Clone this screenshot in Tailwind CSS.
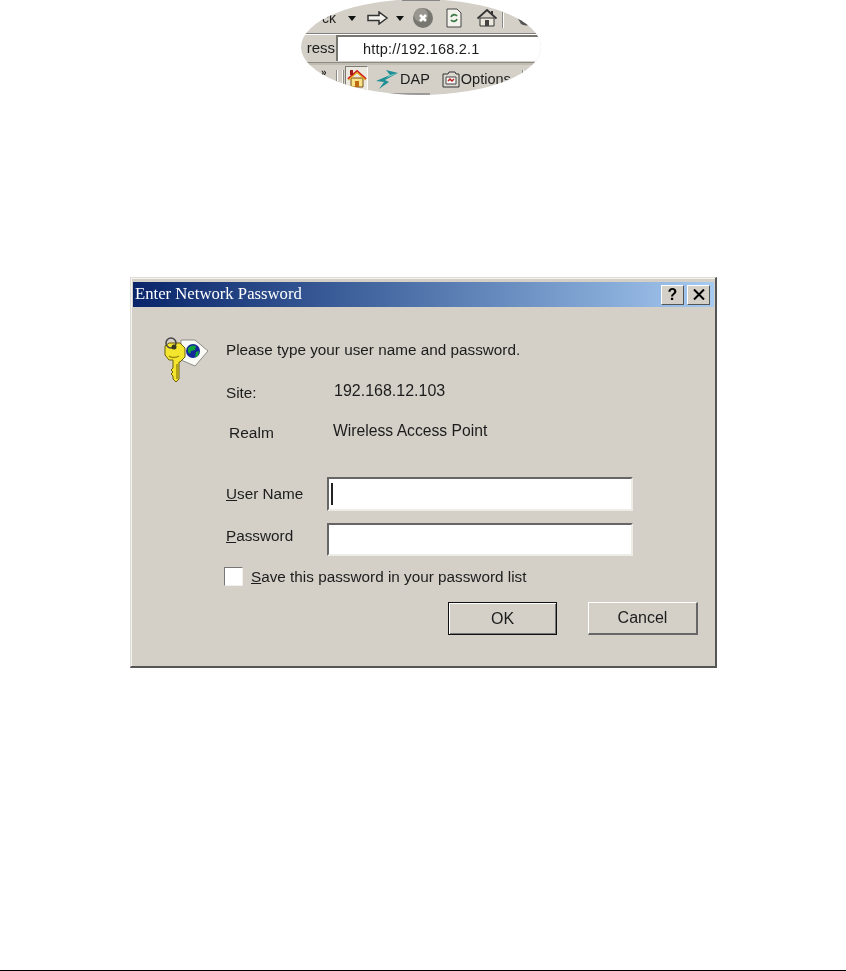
<!DOCTYPE html>
<html>
<head>
<meta charset="utf-8">
<script src="https://cdn.jsdelivr.net/npm/@tailwindcss/browser@4"></script>
</head>
<body class="bg-white font-['Liberation_Sans',sans-serif] text-[#1c1c1c]">
<div class="relative w-[846px] h-[971px] overflow-hidden flex flex-col">

  <!-- lens crop of browser toolbar -->
  <div class="ml-[301px] -mt-[1px] w-[240px] h-[96px] rounded-[50%] overflow-hidden bg-[#d4d0c8] flex flex-col shrink-0 blur-[0.5px]">
    <div class="h-[2px] shrink-0"><div class="ml-[101px] w-[38px] h-[2px] bg-[#888]"></div></div>
    <div class="h-[33px] flex items-center pt-[2px] shrink-0 border-b border-[#808080]">
      <span class="ml-[12px] w-[23px] text-right text-[14px] leading-none">ck</span>
      <svg class="ml-[12px]" width="8" height="5" viewBox="0 0 8 5"><path d="M0 0h8L4 5z" fill="#111"/></svg>
      <svg class="ml-[11px]" width="22" height="14" viewBox="0 0 22 14"><path d="M1 4.500h11V1l8 6-8 6V9.500H1z" fill="#f4f2ec" stroke="#333" stroke-width="1.500"/></svg>
      <svg class="ml-[7px]" width="8" height="5" viewBox="0 0 8 5"><path d="M0 0h8L4 5z" fill="#111"/></svg>
      <svg class="ml-[8px]" width="22" height="22" viewBox="0 0 22 22"><circle cx="11" cy="11" r="10" fill="#77766f"/><circle cx="9" cy="8" r="7" fill="#98968e"/><path d="M8 8l6 6M14 8l-6 6" stroke="#fff" stroke-width="2.500"/></svg>
      <svg class="ml-[12px]" width="16" height="20" viewBox="0 0 16 20"><path d="M1 1h10l4 4v14H1z" fill="#f4f2ec" stroke="#444"/><path d="M5 9a3.500 3.500 0 0 1 6-1M11 11a3.500 3.500 0 0 1-6 1" fill="none" stroke="#3c7a4a" stroke-width="1.800"/></svg>
      <svg class="ml-[15px]" width="20" height="18" viewBox="0 0 20 18"><path d="M3 17V9h14v8z" fill="#ece9df" stroke="#333"/><path d="M0.500 9.500 10 1l9.500 8.500" fill="none" stroke="#333" stroke-width="1.800"/><path d="M14 2h2v4h-2z" fill="#333"/><path d="M8 11h4v6H8z" fill="#444"/></svg>
      <span class="ml-[5px] w-[2px] h-[19px] bg-[#8c8a84] border-r border-white"></span>
      <svg class="ml-[12px] mt-[5px]" width="18" height="12" viewBox="0 0 18 12"><path d="M1 2c4 0 6 3 9 4l7 2c-4 3-9 3-12 1z" fill="#555"/></svg>
    </div>
    <div class="h-[28px] flex shrink-0 border-t border-white">
      <span class="w-[35px] text-right pr-[1px] text-[15px] leading-[26px] whitespace-nowrap">ress</span>
      <div class="flex-1 h-[26px] bg-white border-t-2 border-l-2 border-[#77766f] pl-[25px] text-[14.500px] leading-[24px] tracking-[0.2px]">http://192.168.2.1</div>
    </div>
    <div class="h-[3px] bg-[#c0bcb2] border-t border-[#8c8a84] shrink-0"></div>
    <div class="h-[28px] flex items-center shrink-0">
      <span class="ml-[20px] w-[7px] mb-[12px] text-[10px] font-bold leading-none">»</span>
      <span class="ml-[8px] w-[2px] h-[19px] bg-[#8c8a84] border-r border-white"></span>
      <span class="ml-[4px] w-[2px] h-[19px] bg-[#f4f2ec] border-r border-[#8c8a84]"></span>
      <div class="ml-[1px] w-[23px] h-[26px] bg-[#ebe8e0] border-t border-l border-[#7d7b75] border-b border-b-white border-r border-r-white flex items-center justify-center">
        <svg width="20" height="20" viewBox="0 0 20 20"><path d="M4 18V9h12v9z" fill="#f7e48a" stroke="#7a4a10"/><path d="M1 10 10 2l9 8" fill="none" stroke="#c22" stroke-width="2"/><path d="M1.500 11 10 3.500 18.500 11" fill="none" stroke="#e8b020" stroke-width="1.200"/><path d="M3 1h3v5H3z" fill="#a01818"/><path d="M8 12h4v6H8z" fill="#c06a10"/></svg>
      </div>
      <svg class="ml-[8px]" width="22" height="20" viewBox="0 0 22 20"><path d="M0 12 14 6 10 1 22 4 9 11l4 2L3 20l5-7z" fill="#1e8f95"/><path d="M14 6 22 4 10 9z" fill="#8fd0c8"/></svg>
      <span class="ml-[2px] text-[14.500px] leading-none">DAP</span>
      <svg class="ml-[12px]" width="18" height="17" viewBox="0 0 18 17"><path d="M1 3h5l1-2h6l1 2h3v13H1z" fill="#dcd9d0" stroke="#333"/><path d="M4 6h10v7H4z" fill="#f8f8f8" stroke="#444"/><path d="M6 10l2-2 2 2 2-2" fill="none" stroke="#b22" stroke-width="1.500"/></svg>
      <span class="ml-[1px] text-[14.500px] leading-none w-[50px] whitespace-nowrap">Options</span>
      <span class="ml-[11px] w-[2px] h-[19px] bg-[#8c8a84] border-r border-white"></span>
      <span class="ml-[4px] w-[10px] h-[12px] mb-[6px] border-t-2 border-l-2 border-[#666]"></span>
    </div>
    <div class="h-[2px] shrink-0"><div class="ml-[87px] w-[42px] h-[2px] bg-[#999]"></div></div>
  </div>

  <!-- dialog -->
  <div class="ml-[130px] mt-[182px] w-[587px] h-[391px] shrink-0 bg-[#d4d0c8] border-t border-l border-t-[#dedcd6] border-l-[#dedcd6] border-r-2 border-b-2 border-r-[#555] border-b-[#555] pt-[4px] pl-[2px] pr-[1px] flex flex-col blur-[0.5px] shadow-[inset_1px_1px_0_#f4f3ef]">
    <div class="h-[25px] shrink-0 bg-linear-to-r from-[#0a246a] to-[#a6caf0] flex items-center pl-[2px] pr-[4px]">
      <span class="font-['Liberation_Serif',serif] text-white text-[16.700px] leading-none">Enter Network Password</span>
      <div class="ml-auto flex gap-[3px]">
        <div class="w-[23px] h-[20px] bg-[#d4d0c8] border-t border-l border-white border-r border-b border-r-[#555] border-b-[#555] flex items-center justify-center font-bold text-[16px] leading-none text-black">?</div>
        <div class="w-[23px] h-[20px] bg-[#d4d0c8] border-t border-l border-white border-r border-b border-r-[#555] border-b-[#555] flex items-center justify-center">
          <svg width="12" height="11" viewBox="0 0 12 11"><path d="M1 0.500l10 10M11 0.500l-10 10" stroke="#000" stroke-width="2"/></svg>
        </div>
      </div>
    </div>

    <div class="flex flex-1 min-h-0">
      <div class="w-[93px] shrink-0 pl-[28px] pt-[27px]">
        <svg width="52" height="52" viewBox="163 334 52 52">
          <path d="M183 340 197 340 210 351 197 366 183 360z" fill="#fbfbf6" stroke="#8f8d87"/>
          <circle cx="195" cy="351" r="7" fill="#14289a"/>
          <path d="M190 348c3-3 6-3 8-2l-1 4-4 1-1 3-2-2zM198 352l3-1-1 5-3 1z" fill="#12a33a"/>
          <path d="M171 343h11l5 5v9l-5 5h-1v17l-3 3-3-3v-3l-2-2 2-2-2-2 2-2v-8h-4l-4-5v-9z" fill="#f4e62e" stroke="#6a5f10"/>
          <circle cx="173" cy="343" r="5" fill="none" stroke="#444" stroke-width="1.500"/>
          <circle cx="176" cy="347" r="2.500" fill="#3a3a20"/>
          <path d="M171 356c2 2 7 2 10 0M179 364v15" fill="none" stroke="#9c8c10" stroke-width="1.500"/>
        </svg>
      </div>
      <div class="flex-1 flex flex-col">
        <div class="mt-[33px] h-[20px] text-[15.300px] leading-[20px] whitespace-nowrap">Please type your user name and password.</div>
        <div class="mt-[22px] h-[20px] flex text-[15.300px] leading-[20px]">
          <span class="w-[108px] pt-[1px]">Site:</span><span class="-mt-[1px] text-[16px]">192.168.12.103</span>
        </div>
        <div class="mt-[20px] h-[20px] flex text-[15.300px] leading-[20px]">
          <span class="w-[107px] pl-[3px] pt-[1px] text-[15.500px]">Realm</span><span class="-mt-[1px] text-[15.700px]">Wireless Access Point</span>
        </div>
        <div class="mt-[35px] h-[34px] flex items-center text-[15.300px]">
          <span class="w-[101px]"><span class="underline">U</span>ser Name</span>
          <div class="w-[306px] h-[34px] bg-white border-t-2 border-l-2 border-[#666] border-r-2 border-b-2 border-r-[#eeece6] border-b-[#eeece6] flex items-center pl-[2px]">
            <span class="w-[1.500px] h-[22px] bg-[#222]"></span>
          </div>
        </div>
        <div class="mt-[12px] h-[33px] flex items-center text-[15.300px]">
          <span class="w-[101px] -mt-[6px]"><span class="underline">P</span>assword</span>
          <div class="w-[306px] h-[33px] bg-white border-t-2 border-l-2 border-[#666] border-r-2 border-b-2 border-r-[#eeece6] border-b-[#eeece6]"></div>
        </div>
        <div class="mt-[11px] h-[19px] flex items-center text-[15.300px] -ml-[2px]">
          <div class="w-[19px] h-[19px] bg-white border-t border-l border-[#777] border-r border-b border-r-[#f2f0ea] border-b-[#f2f0ea]"></div>
          <span class="ml-[8px] pt-[2px] whitespace-nowrap"><span class="underline">S</span>ave this password in your password list</span>
        </div>
        <div class="mt-[16px] h-[33px] flex text-[16px]">
          <div class="ml-[222px] w-[109px] h-[33px] border border-[#111] shadow-[inset_1px_1px_0_#fff,inset_-1px_-1px_0_#777] flex items-center justify-center">OK</div>
          <div class="ml-[31px] w-[110px] h-[33px] border-t border-l border-white border-r-2 border-b-2 border-r-[#666] border-b-[#666] flex items-center justify-center">Cancel</div>
        </div>
      </div>
    </div>
  </div>

  <div class="mt-auto h-[1px] bg-black shrink-0"></div>
</div>
</body>
</html>
